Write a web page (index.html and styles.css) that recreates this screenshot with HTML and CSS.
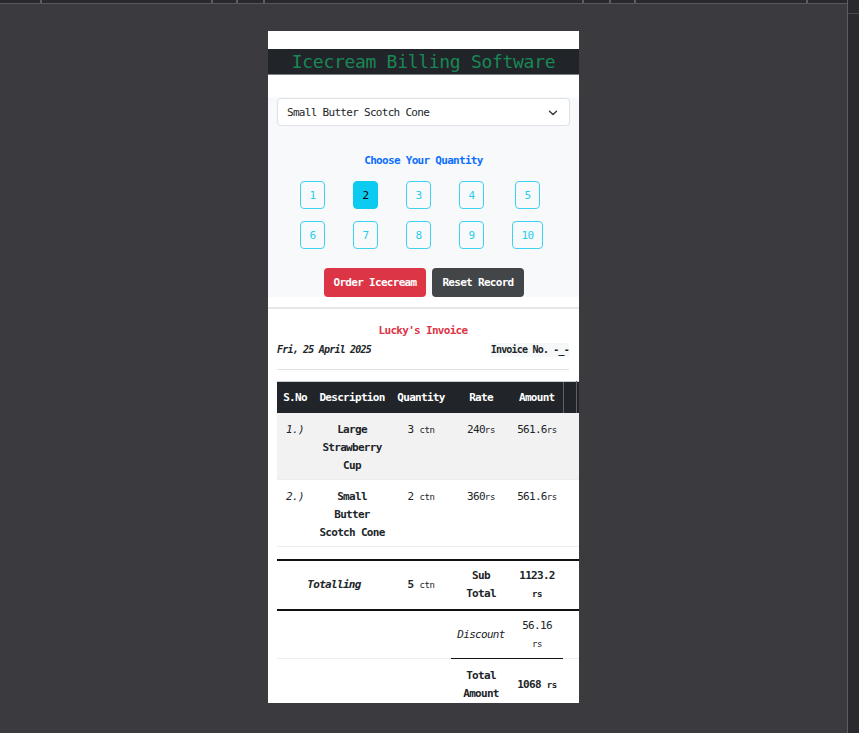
FILE: index.html
```html
<!DOCTYPE html>
<html lang="en">
<head>
<meta charset="utf-8">
<title>Icecream Billing Software</title>
<link rel="stylesheet" href="styles.css">
</head>
<body>
<div class="main">
  <div class="topbar">
    <span class="tick t1"></span><span class="tick t2"></span><span class="tick t3"></span><span class="tick t4"></span>
    <span class="tick t5"></span><span class="tick t6"></span><span class="tick t7"></span><span class="tick t8"></span>
  </div>
  <div class="stage">
    <div class="device">
      <h1 class="brand">Icecream Billing Software</h1>
      <section class="order">
        <div class="select">
          <span>Small Butter Scotch Cone</span>
          <svg class="chev" width="10" height="8" viewBox="0 0 10 8"><path d="M1.5 2.2 5 5.6 8.5 2.2" fill="none" stroke="#343a40" stroke-width="1.4" stroke-linecap="round" stroke-linejoin="round"/></svg>
        </div>
        <h2 class="qty-title">Choose Your Quantity</h2>
        <div class="qty-grid">
          <div class="qty-row">
            <div class="cell"><button class="qty">1</button></div>
            <div class="cell"><button class="qty active">2</button></div>
            <div class="cell"><button class="qty">3</button></div>
            <div class="cell"><button class="qty">4</button></div>
            <div class="cell wide"><button class="qty">5</button></div>
          </div>
          <div class="qty-row">
            <div class="cell"><button class="qty">6</button></div>
            <div class="cell"><button class="qty">7</button></div>
            <div class="cell"><button class="qty">8</button></div>
            <div class="cell"><button class="qty">9</button></div>
            <div class="cell wide"><button class="qty ten">10</button></div>
          </div>
        </div>
        <div class="actions">
          <button class="btn btn-order">Order Icecream</button>
          <button class="btn btn-reset">Reset Record</button>
        </div>
      </section>
      <div class="divider"></div>
      <section class="invoice">
        <h3 class="inv-title">Lucky's Invoice</h3>
        <div class="meta">
          <span class="date">Fri, 25 April 2025</span>
          <span class="inv-no">Invoice No. -_-</span>
        </div>
        <div class="rule"></div>
        <table class="items">
          <colgroup><col class="c1"><col class="c2"><col class="c3"><col class="c4"><col class="c5"><col class="c6"><col class="c7"></colgroup>
          <thead>
            <tr><th>S.No</th><th>Description</th><th>Quantity</th><th>Rate</th><th>Amount</th><th class="edge"></th><th></th></tr>
          </thead>
          <tbody>
            <tr class="striped">
              <td class="sno">1.)</td><td class="desc">Large Strawberry Cup</td><td>3 <small>ctn</small></td><td>240<small>rs</small></td><td>561.6<small>rs</small></td><td></td><td></td>
            </tr>
            <tr>
              <td class="sno">2.)</td><td class="desc">Small Butter Scotch Cone</td><td>2 <small>ctn</small></td><td>360<small>rs</small></td><td>561.6<small>rs</small></td><td></td><td></td>
            </tr>
          </tbody>
        </table>
        <table class="totals">
          <colgroup><col class="c1"><col class="c2"><col class="c3"><col class="c4"><col class="c5"><col class="c6"><col class="c7"></colgroup>
          <tr class="sub">
            <td colspan="2" class="em b">Totalling</td><td class="b">5 <small class="n">ctn</small></td><td class="b">Sub Total</td><td class="b">1123.2 <small>rs</small></td><td></td><td></td>
          </tr>
          <tr class="disc">
            <td></td><td></td><td></td><td class="em dark">Discount</td><td class="dark">56.16 <small>rs</small></td><td></td><td></td>
          </tr>
          <tr class="grand">
            <td></td><td></td><td></td><td class="b">Total Amount</td><td class="b">1068 <small>rs</small></td><td></td><td></td>
          </tr>
        </table>
      </section>
    </div>
  </div>
</div>
<div class="strip"><div class="strip-top"></div></div>
</body>
</html>
```

FILE: styles.css
```css
* { box-sizing: border-box; }

html, body {
  margin: 0;
  height: 733px;
  overflow: hidden;
}

body {
  display: flex;
  background: #3b3a3f;
  font-family: "DejaVu Sans Mono", "Liberation Mono", monospace;
  font-size: 11px;
  letter-spacing: -0.7px;
  color: #212529;
}

.main {
  flex: 1;
  display: flex;
  flex-direction: column;
}

.topbar {
  position: relative;
  height: 4px;
  background: #29282d;
  border-bottom: 1px solid #58575c;
}

.tick {
  position: absolute;
  top: 0;
  width: 2px;
  height: 3px;
  background: #5e5d62;
}
.t1 { left: 40px; }
.t2 { left: 211px; }
.t3 { left: 236px; }
.t4 { left: 263px; }
.t5 { left: 582px; }
.t6 { left: 609px; }
.t7 { left: 634px; }
.t8 { left: 806px; }

.strip {
  width: 12px;
  background: #2a292e;
  border-left: 1px solid #5f5e63;
}
.strip-top {
  height: 14px;
  border-bottom: 1px solid #4a494e;
}

.stage {
  flex: 1;
  padding-top: 27px;
  display: flex;
  justify-content: center;
  align-items: flex-start;
}

.device {
  width: 311px;
  height: 672px;
  background: #fff;
  overflow: hidden;
  padding-top: 18px;
}

.brand {
  margin: 0;
  height: 26px;
  line-height: 25px;
  background: #212529;
  border-bottom: 1px solid #7d8186;
  color: #198754;
  font-size: 18px;
  font-weight: normal;
  letter-spacing: -0.3px;
  text-align: center;
}

.order {
  margin-top: 22px;
  background: #f8f9fa;
  padding: 1px 9px 0;
  height: 200px;
}

.select {
  height: 28px;
  background: #fff;
  border: 1px solid #dee2e6;
  border-radius: 4px;
  display: flex;
  align-items: center;
  justify-content: space-between;
  padding: 1px 11px 0 9px;
  color: #212529;
}

.qty-title {
  margin: 28px 0 0;
  text-align: center;
  color: #0d6efd;
  font-size: 11px;
  line-height: 14px;
  font-weight: bold;
}

.qty-grid {
  margin-top: 13px;
  display: flex;
  flex-direction: column;
  gap: 12px;
  padding-right: 4px;
}

.qty-row {
  display: flex;
  justify-content: center;
}

.cell {
  width: 53px;
  display: flex;
  justify-content: center;
}
.cell.wide { width: 59px; }

.qty {
  width: 25px;
  height: 28px;
  padding: 0;
  border: 1px solid #3fd3f2;
  border-radius: 4px;
  background: transparent;
  color: #27cdef;
  font-family: inherit;
  font-size: 11px;
  letter-spacing: -0.7px;
}
.qty.ten { width: 31px; }
.qty.active {
  background: #0dcaf0;
  border-color: #0dcaf0;
  color: #000;
}

.actions {
  margin-top: 19px;
  display: flex;
  justify-content: center;
  gap: 6px;
}

.btn {
  height: 29px;
  padding: 0 10px;
  border: 0;
  border-radius: 4px;
  color: #fff;
  font-family: inherit;
  font-size: 11px;
  font-weight: bold;
  letter-spacing: -0.7px;
}
.btn-order { background: #dc3545; }
.btn-reset { background: #424649; }

.divider {
  margin-top: 10px;
  height: 2px;
  background: #e8e8e8;
}

.invoice {
  padding: 0 10px 0 9px;
}

.inv-title {
  margin: 15px 0 0;
  text-align: center;
  color: #dc3545;
  font-size: 11px;
  line-height: 14px;
  font-weight: bold;
}

.meta {
  margin-top: 5px;
  display: flex;
  justify-content: space-between;
  align-items: center;
  font-size: 10px;
  letter-spacing: -0.8px;
  font-weight: bold;
  line-height: 14px;
}
.date { font-style: italic; }
.inv-no { background: #f6f7f8; padding-left: 1px; }

.rule {
  margin-top: 12px;
  height: 1px;
  background: #e2e2e2;
}

table {
  border-collapse: collapse;
  table-layout: fixed;
  width: 320px;
}
.c1 { width: 36px; }
.c2 { width: 78px; }
.c3 { width: 60px; }
.c4 { width: 60px; }
.c5 { width: 52px; }
.c6 { width: 13px; }
.c7 { width: 21px; }

.items { margin-top: 11px; }

.items th {
  background: #212529;
  color: #fff;
  font-weight: bold;
  height: 31px;
  padding: 0 2px;
  border-top: 1px solid #c9ccd0;
  text-align: center;
  white-space: nowrap;
}
.items th.edge {
  border-left: 1px solid #5d6166;
  border-right: 1px solid #5d6166;
}

.items td {
  vertical-align: top;
  text-align: center;
  padding: 8px 5px 4px;
  line-height: 18px;
  border-bottom: 1px solid #ececec;
}
.items tr.striped td { background: #f2f2f2; }
.items td.sno { font-style: italic; }
.items td.desc { font-weight: bold; }

small {
  font-size: 9px;
  letter-spacing: -0.4px;
}
small.n { font-weight: normal; }

.totals { margin-top: 12px; }
.totals td {
  text-align: center;
  vertical-align: middle;
  line-height: 18px;
  padding: 6px 5px;
}
.totals tr.sub td {
  border-top: 2px solid #111;
  border-bottom: 2px solid #111;
}
.totals tr.disc td {
  padding: 6px 5px 5px;
  border-bottom: 1px solid #eeeeee;
}
.totals tr.disc td.dark { border-bottom: 1px solid #111; }
.totals tr.grand td { padding-top: 8px; }
.totals .b { font-weight: bold; }
.totals .em { font-style: italic; }
```
